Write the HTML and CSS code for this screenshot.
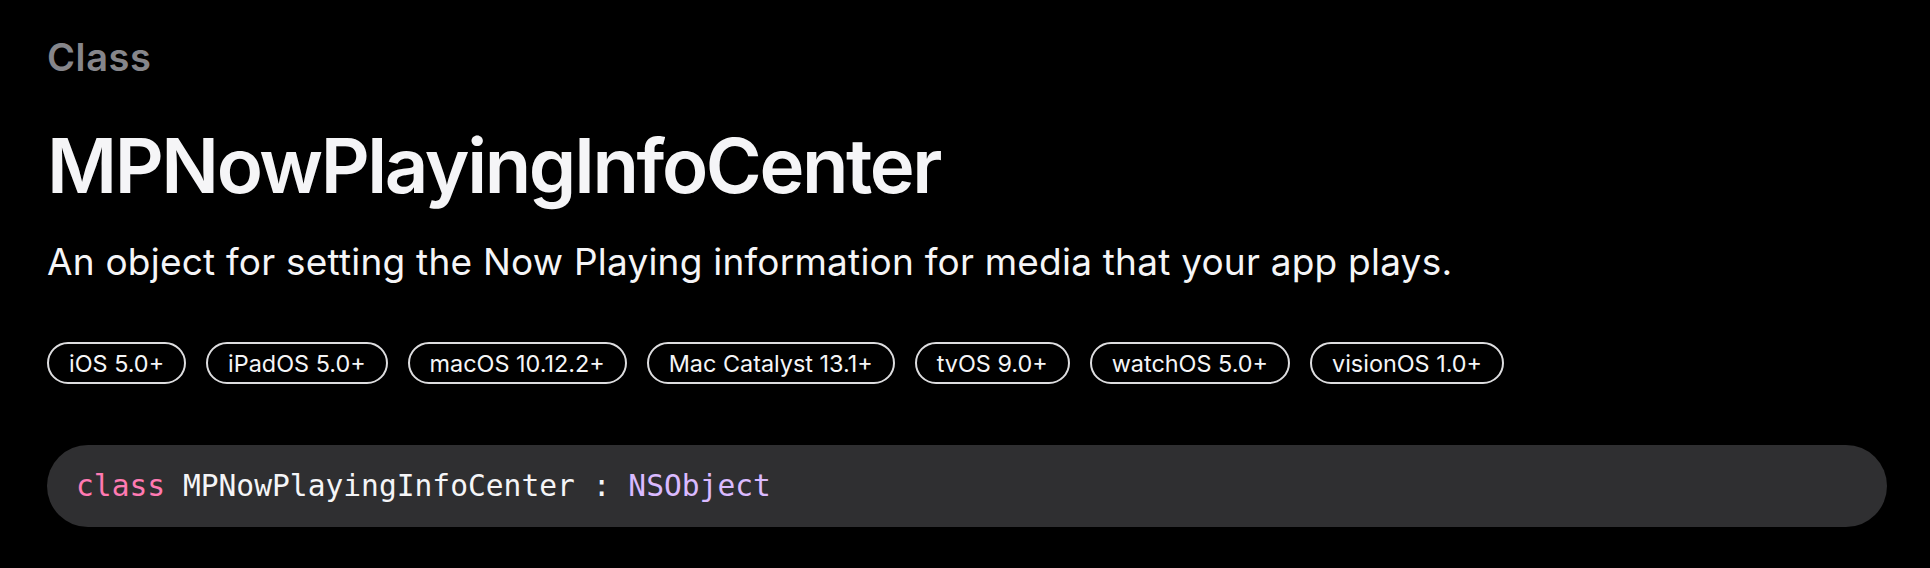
FILE: index.html
```html
<!DOCTYPE html>
<html lang="en">
<head>
<meta charset="utf-8">
<title>MPNowPlayingInfoCenter</title>
<link rel="stylesheet" href="styles.css">
</head>
<body>
<main class="topic">
  <div class="eyebrow">Class</div>
  <h1 class="title">MPNowPlayingInfoCenter</h1>
  <p class="abstract">An object for setting the Now Playing information for media that your app plays.</p>
  <ul class="platforms">
    <li class="platform">iOS 5.0+</li>
    <li class="platform">iPadOS 5.0+</li>
    <li class="platform">macOS 10.12.2+</li>
    <li class="platform">Mac Catalyst 13.1+</li>
    <li class="platform">tvOS 9.0+</li>
    <li class="platform">watchOS 5.0+</li>
    <li class="platform">visionOS 1.0+</li>
  </ul>
  <div class="declaration"><code class="code"><span class="kw">class</span> MPNowPlayingInfoCenter : <span class="type">NSObject</span></code></div>
</main>
</body>
</html>
```

FILE: styles.css
```css
html, body {
  margin: 0;
  padding: 0;
  background: #000;
}
body {
  font-family: Inter, "Noto Sans", sans-serif;
  color: #f5f5f7;
}
.topic {
  padding: 34px 43px 0 47px;
}
.eyebrow {
  font-size: 38px;
  line-height: 46px;
  font-weight: 600;
  color: #86868b;
  letter-spacing: 0.6px;
}
.title {
  margin: 43px 0 0;
  font-size: 76px;
  line-height: 84px;
  font-weight: 600;
  letter-spacing: -2.4px;
  color: #f5f5f7;
}
.abstract {
  margin: 33px 0 0;
  font-size: 37px;
  line-height: 44px;
  font-weight: 400;
  letter-spacing: 0.22px;
  color: #f5f5f7;
}
.platforms {
  list-style: none;
  margin: 58px 0 0;
  padding: 0;
  display: flex;
  gap: 20px;
}
.platform {
  height: 42px;
  box-sizing: border-box;
  padding: 0 20px;
  border: 2px solid rgba(245, 245, 247, 0.9);
  border-radius: 21px;
  display: flex;
  align-items: center;
  font-size: 23.4px;
  color: #f5f5f7;
}
.declaration {
  margin-top: 61px;
  height: 82px;
  border-radius: 41px;
  background: #2f2f31;
  display: flex;
  align-items: center;
  padding-left: 29px;
}
.code {
  font-family: "DejaVu Sans Mono", "Liberation Mono", monospace;
  font-size: 29.6px;
  color: #f5f5f7;
  white-space: pre;
}
.kw {
  color: #ff7ab2;
}
.type {
  color: #dabaff;
}
```
